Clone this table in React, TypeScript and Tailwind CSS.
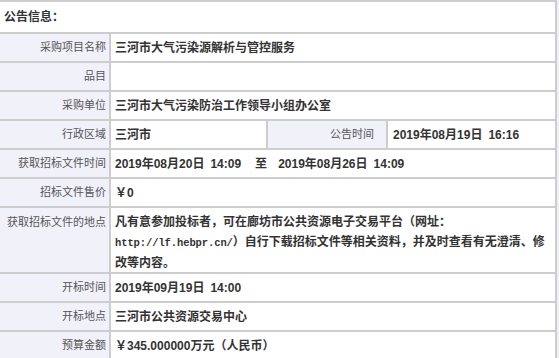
import type { ReactNode } from "react"

const line = "border-[#cdcdcd]"

function Label({ children, className = "" }: { children: ReactNode; className?: string }) {
  return (
    <div className={`bg-[#f1f1fa] flex justify-end text-[11px] text-[#555] ${className}`}>
      {children}
    </div>
  )
}

function Row({ label, children }: { label: string; children?: ReactNode }) {
  return (
    <div className={`flex h-[29px] border-t-2 ${line}`}>
      <Label className="w-[109px] shrink-0 items-center pr-[3px]">{label}</Label>
      <div className={`flex-1 flex items-center border-l-2 ${line} pl-[4px] text-[12px] font-bold text-[#333]`}>
        {children}
      </div>
    </div>
  )
}

export default function App() {
  return (
    <div className="w-[559px] h-[358px] overflow-hidden bg-[#eef0f3] font-['Liberation_Sans','Noto_Sans_CJK_SC',sans-serif]">
      <div className={`w-[557px] bg-white border-t-2 border-r-2 ${line}`}>
        <div className="h-[30px] flex items-center pl-[4px] text-[12px] font-bold text-[#333]">公告信息：</div>

        <Row label="采购项目名称">三河市大气污染源解析与管控服务</Row>
        <Row label="品目" />
        <Row label="采购单位">三河市大气污染防治工作领导小组办公室</Row>

        <div className={`flex h-[29px] border-t-2 ${line}`}>
          <Label className="w-[109px] shrink-0 items-center pr-[3px]">行政区域</Label>
          <div className={`w-[157px] flex items-center border-l-2 ${line} pl-[4px] text-[12px] font-bold text-[#333]`}>
            三河市
          </div>
          <Label className={`w-[120px] items-center pr-[12px] border-l-2 ${line}`}>公告时间</Label>
          <div className={`flex-1 flex items-center border-l-2 ${line} pl-[5px] text-[12px] font-bold text-[#333]`}>
            2019年08月19日<span className="ml-[6px]">16:16</span>
          </div>
        </div>

        <Row label="获取招标文件时间">
          2019年08月20日<span className="ml-[6px]">14:09</span>
          <span className="ml-[14px] mr-[11px]">至</span>
          2019年08月26日<span className="ml-[6px]">14:09</span>
        </Row>
        <Row label="招标文件售价">￥0</Row>

        <div className={`flex h-[66px] border-t-2 ${line}`}>
          <Label className="w-[109px] shrink-0 items-start pt-[4px] pr-[3px] leading-[20px]">获取招标文件的地点</Label>
          <div className={`flex-1 border-l-2 ${line} pl-[4px] pt-[4px] text-[12px] leading-[20px] font-bold text-[#333]`}>
            凡有意参加投标者，可在廊坊市公共资源电子交易平台（网址：
            <br />
            <span className="font-['Liberation_Mono',monospace] text-[10.5px] tracking-[-0.1px]">http://lf.hebpr.cn/</span>）自行下载招标文件等相关资料，并及时查看有无澄清、修
            <br />
            改等内容。
          </div>
        </div>

        <Row label="开标时间">
          2019年09月19日<span className="ml-[6px]">14:00</span>
        </Row>
        <Row label="开标地点">三河市公共资源交易中心</Row>
        <Row label="预算金额">￥345.000000万元（人民币）</Row>
      </div>
    </div>
  )
}
